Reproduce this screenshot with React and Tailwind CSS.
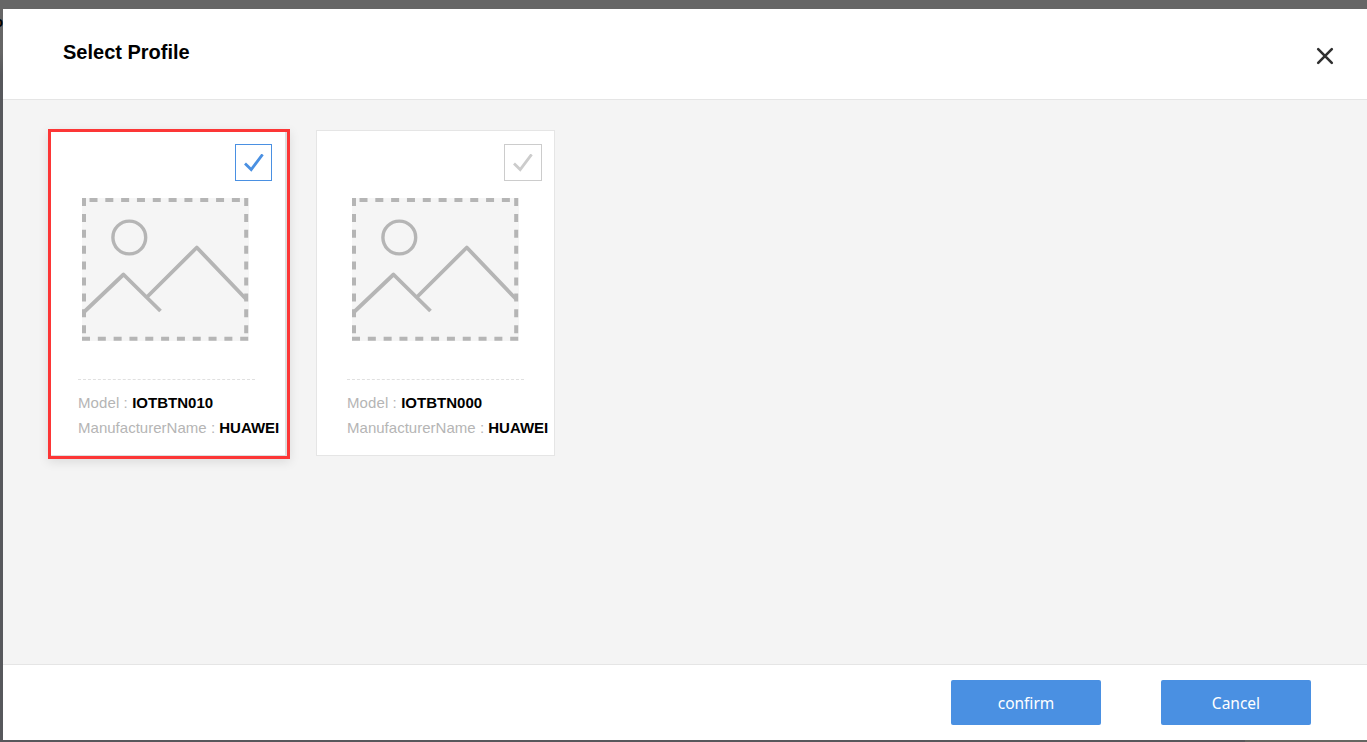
import React from "react";

function Placeholder() {
  return (
    <svg width="167" height="143" viewBox="0 0 167 143" className="block" fill="none" stroke="#b5b5b5">
      <rect width="167" height="143" fill="#f5f5f5" stroke="none" />
      <path d="M7.5 2H164" strokeWidth="4" strokeDasharray="8 7.82" />
      <path d="M0 141H166.4" strokeWidth="4" strokeDasharray="8 7.82" transform="translate(0 -0.2)" />
      <path d="M2 0V138M164.2 0V138" strokeWidth="4" strokeDasharray="8 7.9" />
      <circle cx="47.3" cy="39.5" r="16.4" strokeWidth="3.4" />
      <path d="M1.5 114.5L41.5 76.5L78.5 113" strokeWidth="3.8" strokeLinejoin="round" />
      <path d="M65.5 98.5L114.8 49.5L164 101" strokeWidth="3.8" strokeLinejoin="round" />
    </svg>
  );
}

function Check() {
  return (
    <svg width="20" height="18" viewBox="0 0 20 18" className="block" fill="none" stroke="currentColor" strokeWidth="2.8">
      <path d="M1 9.6L7.2 15.6L18.6 0.4" />
    </svg>
  );
}

function Details({ model }) {
  return (
    <div className="border-t border-dashed border-[#e0e0e0] pt-[10px] text-[15px] leading-[25px] whitespace-nowrap text-[#b5b5b5]">
      <p>
        <span className="tracking-[0.1px]">Model : </span>
        <b className="text-black tracking-[0.02px]">{model}</b>
      </p>
      <p>
        <span className="tracking-[0.02px]">ManufacturerName : </span>
        <b className="text-black">HUAWEI</b>
      </p>
    </div>
  );
}

export default function App() {
  return (
    <div className="flex h-[742px] w-[1367px] flex-col overflow-hidden bg-[#57585c] font-['Liberation_Sans',sans-serif]">
      <div className="h-[9px] shrink-0 bg-[#666]" />
      <div className="flex h-[731px]">
        <div className="flex w-[3px] shrink-0 justify-end overflow-hidden bg-linear-to-b from-[#666] from-0% via-[#666] via-6% to-[#57585c] to-9%">
          <span className="mt-[5px] text-[14px] leading-[16px] font-bold text-black">o</span>
        </div>
        <main className="flex flex-1 flex-col bg-white">
          <header className="flex h-[91px] shrink-0 justify-between border-b border-[#e5e5e5] pl-[60px] pr-[33px]">
            <h1 className="mt-[31px] text-[20px] leading-[24px] font-bold text-black">Select Profile</h1>
            <button aria-label="Close" className="mt-[38px] h-[18px] w-[18px] text-[#303030]">
              <svg width="18" height="18" viewBox="0 0 18 18" fill="none" stroke="currentColor" strokeWidth="2.6" strokeLinecap="round">
                <path d="M2.2 2.2L15.8 15.8M15.8 2.2L2.2 15.8" />
              </svg>
            </button>
          </header>
          <section className="flex flex-1 items-start bg-[#f4f4f4] pl-[45px] pt-[29px]">
            <article className="h-[330px] w-[242px] shrink-0 border-[3px] border-[#fc3636] bg-white shadow-[0_3px_10px_rgba(0,0,0,0.1)]">
              <div className="flex h-full w-[236px] flex-col border-r-2 border-b border-[#dedede]">
                <div className="mt-[12px] ml-[184px] flex h-[37px] w-[37px] items-center justify-center border border-[#4a90e2] text-[#4a90e2]">
                  <Check />
                </div>
                <div className="mt-[17px] ml-[31px]"><Placeholder /></div>
                <div className="mt-[38px] ml-[27px] w-[177px]"><Details model="IOTBTN010" /></div>
              </div>
            </article>
            <article className="mt-px ml-[26px] h-[326px] w-[239px] shrink-0 border border-[#e5e5e5] bg-white">
              <div className="mt-[13px] ml-[187px] flex h-[37px] w-[38px] items-center justify-center border border-[#ccc] text-[#ccc]">
                <Check />
              </div>
              <div className="mt-[17px] ml-[35px]"><Placeholder /></div>
              <div className="mt-[38px] ml-[30px] w-[177px]"><Details model="IOTBTN000" /></div>
            </article>
          </section>
          <footer className="flex h-[76px] shrink-0 justify-end gap-[60px] border-t border-[#e5e5e5] pt-[15px] pr-[56px] font-['Noto_Sans',sans-serif] text-[15.5px] text-white">
            <button className="h-[45px] w-[150px] rounded-[2px] bg-[#4a90e2] pt-[2px]">confirm</button>
            <button className="h-[45px] w-[150px] rounded-[2px] bg-[#4a90e2] pt-[2px]">Cancel</button>
          </footer>
        </main>
      </div>
      <div className="flex flex-1 justify-end">
        <div className="w-[122px] bg-[#656661]" />
      </div>
    </div>
  );
}
